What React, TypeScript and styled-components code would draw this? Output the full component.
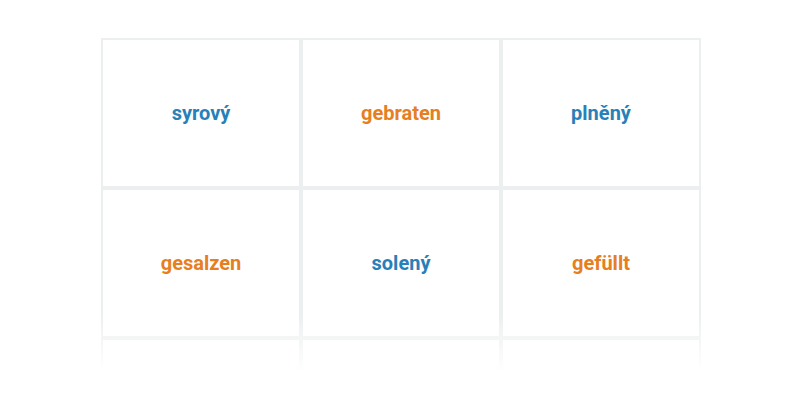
import styled, { createGlobalStyle } from 'styled-components'

type Lang = 'cs' | 'de'

const words: { text: string; lang: Lang }[] = [
  { text: 'syrový', lang: 'cs' },
  { text: 'gebraten', lang: 'de' },
  { text: 'plněný', lang: 'cs' },
  { text: 'gesalzen', lang: 'de' },
  { text: 'solený', lang: 'cs' },
  { text: 'gefüllt', lang: 'de' },
]

const GlobalStyle = createGlobalStyle`
  html, body {
    margin: 0;
    padding: 0;
    background: #fff;
    font-family: Roboto, "Liberation Sans", sans-serif;
  }
`

export default function App() {
  return (
    <>
      <GlobalStyle />
      <Page>
        <Board>
          <Grid>
            {words.map(w => (
              <Card key={w.text}>
                <Word $lang={w.lang}>{w.text}</Word>
              </Card>
            ))}
            {/* next row, only peeking out under the fade */}
            <Card />
            <Card />
            <Card />
          </Grid>
        </Board>
      </Page>
    </>
  )
}

const Page = styled.div`
  padding: 38px 0 0 101px;
`

const Board = styled.div`
  position: relative;
  width: 600px;
  height: 337px;
  overflow: hidden;

  &::after {
    content: '';
    position: absolute;
    left: 0;
    right: 0;
    bottom: 0;
    height: 60px;
    background: linear-gradient(to bottom, rgba(255, 255, 255, 0), #fff 95%);
  }
`

const Grid = styled.div`
  display: grid;
  grid-template-columns: repeat(3, 196px);
  grid-auto-rows: 146px;
  gap: 4px;
  padding: 2px;
  background: #eceff0;
`

const Card = styled.div`
  display: flex;
  align-items: center;
  justify-content: center;
  background: #fff;
`

const Word = styled.span<{ $lang: Lang }>`
  font-size: 20px;
  font-weight: 700;
  line-height: 1;
  color: ${({ $lang }) => ($lang === 'cs' ? '#2980b9' : '#e67e22')};
`
